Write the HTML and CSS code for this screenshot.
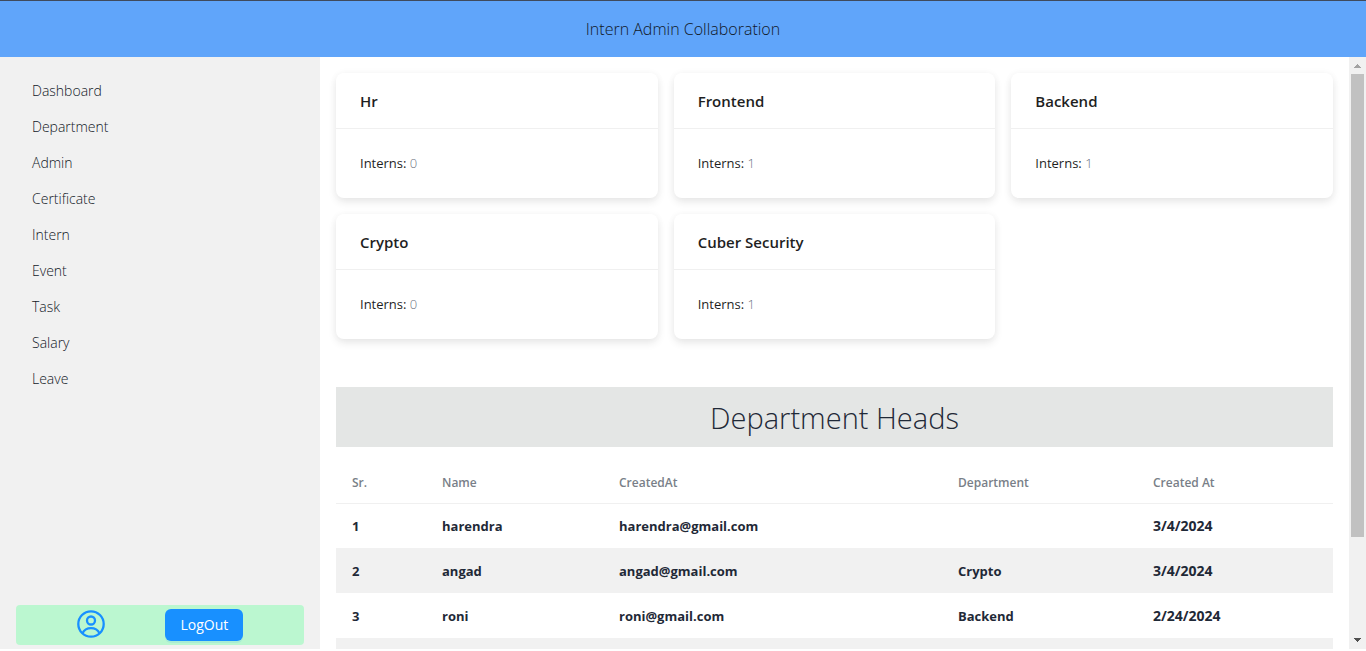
FILE: index.html
```html
<!DOCTYPE html>
<html lang="en">
<head>
<meta charset="utf-8">
<title>Intern Admin Collaboration</title>
<link rel="stylesheet" href="styles.css">
</head>
<body>
<header class="topbar">Intern Admin Collaboration</header>
<div class="layout">
  <aside class="sidebar">
    <nav class="menu">
      <a href="#">Dashboard</a>
      <a href="#">Department</a>
      <a href="#">Admin</a>
      <a href="#">Certificate</a>
      <a href="#">Intern</a>
      <a href="#">Event</a>
      <a href="#">Task</a>
      <a href="#">Salary</a>
      <a href="#">Leave</a>
    </nav>
    <div class="account">
      <svg class="avatar" viewBox="0 0 28 28" fill="none" stroke="currentColor" stroke-width="2.300" aria-hidden="true">
        <circle cx="14" cy="13" r="12.700"/>
        <circle cx="14" cy="9.500" r="4"/>
        <path d="M5.500 22.200C7.200 18.800 10 17.200 14 17.200s6.800 1.600 8.500 5"/>
      </svg>
      <button class="logout" type="button">LogOut</button>
    </div>
  </aside>
  <main class="content">
    <section class="cards">
      <article class="card"><h2>Hr</h2><p>Interns: <span>0</span></p></article>
      <article class="card"><h2>Frontend</h2><p>Interns: <span>1</span></p></article>
      <article class="card"><h2>Backend</h2><p>Interns: <span>1</span></p></article>
      <article class="card"><h2>Crypto</h2><p>Interns: <span>0</span></p></article>
      <article class="card"><h2>Cuber Security</h2><p>Interns: <span>1</span></p></article>
    </section>
    <h1 class="heading">Department Heads</h1>
    <table class="heads">
      <colgroup><col class="c-sr"><col class="c-name"><col class="c-mail"><col class="c-dept"><col class="c-date"></colgroup>
      <thead>
        <tr><th>Sr.</th><th>Name</th><th>CreatedAt</th><th>Department</th><th>Created At</th></tr>
      </thead>
      <tbody>
        <tr><td>1</td><td>harendra</td><td>harendra@gmail.com</td><td></td><td class="date">3/4/2024</td></tr>
        <tr><td>2</td><td>angad</td><td>angad@gmail.com</td><td>Crypto</td><td class="date">3/4/2024</td></tr>
        <tr><td>3</td><td>roni</td><td>roni@gmail.com</td><td>Backend</td><td class="date">2/24/2024</td></tr>
        <tr><td></td><td></td><td></td><td></td><td></td></tr>
      </tbody>
    </table>
  </main>
  <div class="scrollbar" aria-hidden="true">
    <svg class="arrow up" viewBox="0 0 17 17"><path d="M8 7h1v1h1v1h1v1h1v1H5v-1h1V9h1V8h1z"/></svg>
    <div class="track"><div class="thumb"></div></div>
    <svg class="arrow down" viewBox="0 0 17 17"><path d="M5 6h7v1h-1v1h-1v1H9v1H8V9H7V8H6V7H5z"/></svg>
  </div>
</div>
</body>
</html>
```
FILE: styles.css
```css
* {
  box-sizing: border-box;
}

body {
  display: flex;
  flex-direction: column;
  height: 100vh;
  margin: 0;
  padding-bottom: 2px;
  overflow: hidden;
  background: #fff;
  color: #1f2937;
  font-family: "Segoe UI", "Open Sans", "Noto Sans", sans-serif;
  font-size: 14px;
  line-height: 20px;
}

.topbar {
  flex: none;
  padding: 16px;
  border-top: 1px solid #3f4a5c;
  background: #60a5fa;
  color: #111827;
  font-size: 16px;
  font-weight: 300;
  line-height: 24px;
  text-align: center;
}

.layout {
  display: flex;
  flex: 1;
  min-height: 0;
}

.sidebar {
  display: flex;
  flex: none;
  flex-direction: column;
  justify-content: space-between;
  width: 320px;
  padding: 16px 16px 4px;
  background: #f1f1f1;
}

.menu {
  display: flex;
  flex-direction: column;
}

.menu a {
  padding: 8px 16px;
  color: #111827;
  font-weight: 300;
  text-decoration: none;
}

.account {
  display: flex;
  align-items: center;
  justify-content: space-evenly;
  height: 40px;
  border-radius: 4px;
  background: #bbf7d0;
}

.avatar {
  width: 28px;
  height: 28px;
  overflow: visible;
  color: #1890ff;
}

.logout {
  height: 32px;
  padding: 4px 15px;
  border: 0;
  border-radius: 6px;
  background: #1890ff;
  box-shadow: 0 2px 0 rgba(5, 145, 255, 0.1);
  color: #fff;
  font: inherit;
}

.content {
  flex: 1;
  min-width: 0;
  padding: 16px;
  overflow: hidden;
}

.cards {
  display: grid;
  grid-template-columns: repeat(3, 1fr);
  gap: 16px;
}

.card {
  border-radius: 8px;
  box-shadow: 0 4px 8px rgba(0, 0, 0, 0.09), 0 0 8px rgba(0, 0, 0, 0.03);
  color: #1f1f1f;
}

.card h2 {
  margin: 0;
  padding: 16px 24px 15px;
  border-bottom: 1px solid #f0f0f0;
  font-size: 15px;
  font-weight: 600;
  line-height: 24px;
}

.card p {
  margin: 0;
  padding: 24px 24px 25px;
  font-size: 13px;
}

.card span {
  color: #6b7280;
  font-weight: 300;
}

.heading {
  margin: 48px 0 16px;
  padding: 13px 12px 11px;
  background: #e4e6e5;
  font-size: 29px;
  font-weight: 300;
  line-height: 36px;
  text-align: center;
}

.heads {
  width: 100%;
  border-collapse: collapse;
  table-layout: fixed;
}

.c-sr { width: 90px; }
.c-name { width: 177px; }
.c-mail { width: 339px; }
.c-dept { width: 195px; }
.c-date { width: 196px; }

.heads th {
  height: 40px;
  padding: 0 16px;
  border-bottom: 1px solid #f0f0f0;
  color: #797f88;
  font-size: 12px;
  font-weight: 600;
  text-align: left;
}

.heads td {
  height: 45px;
  padding: 0 16px;
  font-size: 13px;
  font-weight: 700;
}

.heads .date {
  font-size: 14px;
}

.heads tbody tr:nth-child(even) {
  background: #f1f1f1;
}

.scrollbar {
  display: flex;
  flex: none;
  flex-direction: column;
  width: 17px;
  background: #f1f1f1;
}

.arrow {
  flex: none;
  width: 17px;
  height: 17px;
}

.up { fill: #a3a3a3; }
.down { fill: #505050; }

.track {
  flex: 1;
  padding: 0 2px;
}

.thumb {
  height: 83%;
  background: #c1c1c1;
}
```
